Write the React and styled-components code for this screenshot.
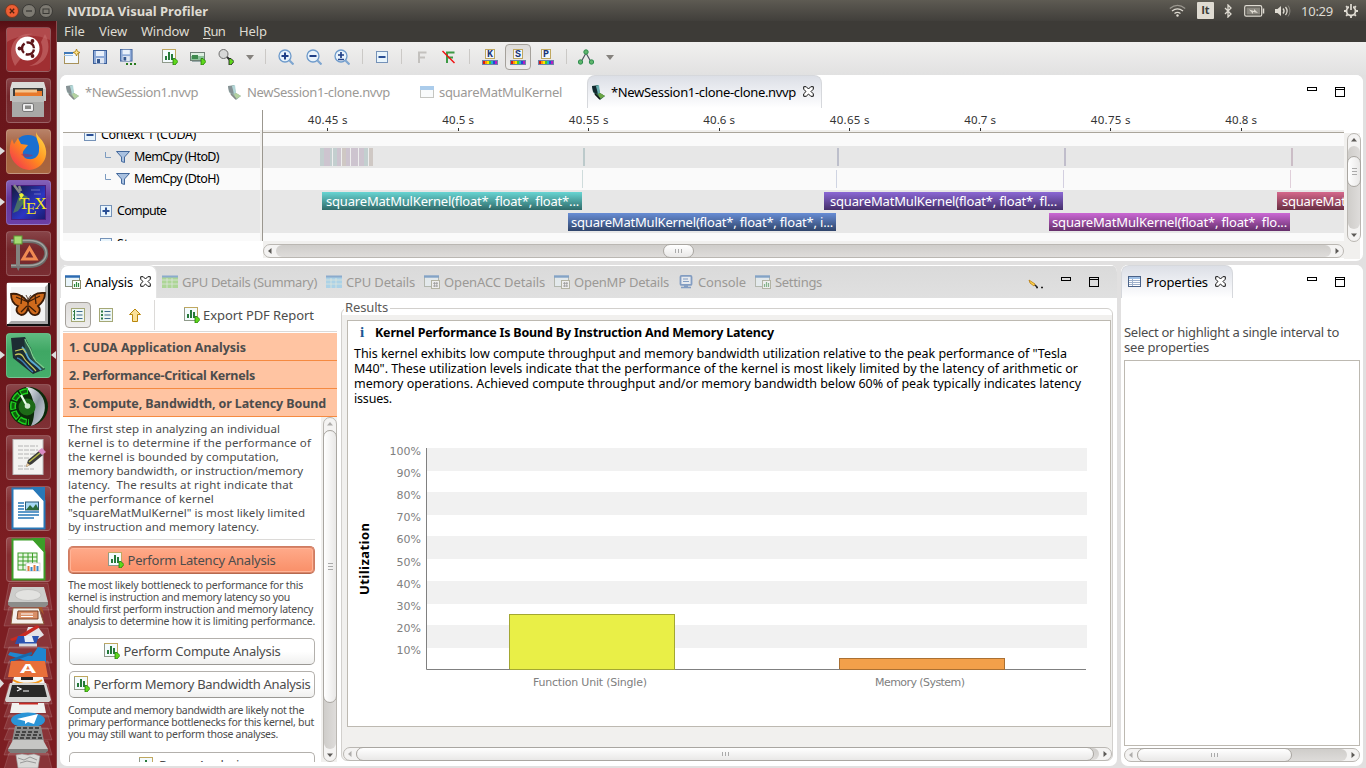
import React, { useLayoutEffect, useRef, useState } from "react";
import styled, { createGlobalStyle, css } from "styled-components";

const Global = createGlobalStyle`
  * { box-sizing: border-box; }
  html, body { margin: 0; padding: 0; overflow: hidden; background: #e1e0e0; }
  body { font-family: "Noto Sans", "Open Sans", sans-serif; font-size: 13px; color: #000; }
  svg { display: block; flex: none; }
`;

/* ---------- text ---------- */

const TextSpan = styled.span`
  display: block;
  flex: none;
  white-space: pre;
  width: ${(p) => p.$w}px;
  font-size: ${(p) => p.$size || 13}px;
  font-weight: ${(p) => (p.$bold ? 700 : 400)};
  color: ${(p) => p.$color || "inherit"};
  line-height: ${(p) => (p.$lh ? p.$lh + "px" : "normal")};
  margin-left: ${(p) => p.$ml || 0}px;
`;

// A label that tracks its letters so that it fills the given advance width.
function Text({ w, size, bold, color, lh, ml, children }) {
  const ref = useRef(null);
  const [spacing, setSpacing] = useState(0);
  useLayoutEffect(() => {
    const range = document.createRange();
    range.selectNodeContents(ref.current);
    const natural = range.getBoundingClientRect().width;
    const n = ref.current.textContent.length;
    if (n > 0) setSpacing((w - natural) / n);
  }, [w]);
  return (
    <TextSpan ref={ref} $w={w} $size={size} $bold={bold} $color={color} $lh={lh} $ml={ml} style={{ letterSpacing: spacing }}>
      {children}
    </TextSpan>
  );
}

/* ---------- desktop frame ---------- */

const Desktop = styled.div`
  width: 1366px;
  height: 768px;
  display: flex;
  flex-direction: column;
  overflow: hidden;
`;
const TitleBar = styled.header`
  height: 21px;
  flex: none;
  display: flex;
  align-items: center;
  padding: 0 7px 0 5px;
  background: linear-gradient(#5e5b53, #58554e 20%, #413f3b);
  color: #dfdbd2;
`;
const WindowButtons = styled.div`
  display: flex;
  gap: 3px;
  width: 62px;
`;
const Indicators = styled.div`
  margin-left: auto;
  display: flex;
  align-items: center;
`;
const Indicator = styled.div`
  margin-right: ${(p) => p.$gap || 0}px;
`;
const LangBadge = styled.div`
  width: 17px;
  height: 17px;
  border-radius: 1px;
  background: #dfdbd2;
  color: #3c3b37;
  font: 700 11px/16px "Noto Sans", sans-serif;
  text-align: center;
  margin-right: 10px;
`;
const Workspace = styled.div`
  flex: 1;
  min-height: 0;
  display: flex;
`;
const Launcher = styled.aside`
  width: 57px;
  flex: none;
  padding: 6px 0 0 6px;
  background: linear-gradient(#540f14 0, #6a161b 12px, #6b171c 45%, #7c1e22 70%, #7c1e22);
  border-right: 1px solid #8b4a4d;
  display: flex;
  flex-direction: column;
  gap: 6px;
  position: relative;
`;
const Tile = styled.div`
  width: 45px;
  height: 45px;
  flex: none;
  border-radius: 4px;
  background: ${(p) => p.$bg || "linear-gradient(rgba(255,255,255,.2), rgba(255,255,255,.07) 40%, rgba(255,255,255,.1))"};
  border: 1px solid rgba(255, 255, 255, 0.17);
  display: flex;
  align-items: center;
  justify-content: center;
  position: relative;
`;
const Pip = styled.i`
  position: absolute;
  top: 17px;
  ${(p) => (p.$right ? "right: -6px; border-right: 5px solid #ddd;" : "left: -7px; border-left: 5px solid #ddd;")}
  border-top: 4px solid transparent;
  border-bottom: 4px solid transparent;
`;
const FoldedStack = styled.div`
  margin: -6px 0 0 -6px;
`;
const AppWindow = styled.main`
  flex: 1;
  min-width: 0;
  display: flex;
  flex-direction: column;
`;
const MenuBar = styled.nav`
  height: 21px;
  flex: none;
  display: flex;
  align-items: center;
  gap: 14px;
  padding: 0 0 1px 7px;
  background: #3d3b37;
  color: #dfdbd2;
  & u { text-underline-offset: 2px; }
`;
const ToolBar = styled.div`
  height: 33px;
  flex: none;
  display: flex;
  align-items: center;
  padding: 0 0 3px 1px;
  background: linear-gradient(#f1f0ef, #e1e1e1);
`;
const Tool = styled.div`
  width: 28px;
  height: 28px;
  display: flex;
  align-items: center;
  justify-content: center;
  margin-left: ${(p) => p.$gap || 0}px;
`;
const Toggle = styled.div`
  width: 26px;
  height: 26px;
  flex: none;
  display: flex;
  align-items: center;
  justify-content: center;
  border: 1px solid #a5a19b;
  border-radius: 4px;
  background: linear-gradient(#dedcda, #eeedec);
`;
const Separator = styled.div`
  width: ${(p) => p.$w}px;
  height: 15px;
  display: flex;
  justify-content: center;
  margin-top: -2px;
  &::after { content: ""; width: 1px; background: #cbc9c6; }
`;
const DropArrow = styled.div`
  width: 19px;
  display: flex;
  justify-content: center;
  &::after {
    content: "";
    border: 4px solid transparent;
    border-top: 5px solid #85827d;
    border-bottom: 0;
  }
`;

/* ---------- panels ---------- */

const Body = styled.div`
  flex: 1;
  min-height: 0;
  padding: 0 3px 2px 3px;
  display: flex;
  flex-direction: column;
  gap: 4px;
  background: #e1e0e0;
`;
const Lower = styled.div`
  flex: 1;
  min-height: 0;
  display: flex;
  gap: 4px;
`;
const Panel = styled.section`
  background: #fff;
  border-radius: 7px;
  overflow: hidden;
  display: flex;
  flex-direction: column;
  ${(p) => (p.$h ? css`height: ${p.$h}px; flex: none;` : "")}
  ${(p) => (p.$w ? css`width: ${p.$w}px; flex: none;` : "")}
`;
const TabStrip = styled.div`
  height: 33px;
  flex: none;
  display: flex;
  align-items: center;
  padding-right: ${(p) => p.$pr || 18}px;
  background: ${(p) => (p.$grey ? "linear-gradient(#fff 1px, #dadada 1px, #e0e0e0)" : "#fff")};
  color: #9b9996;
`;
const Tab = styled.div`
  display: flex;
  align-items: center;
  height: 33px;
  flex: none;
  width: ${(p) => p.$w}px;
  padding: 1px 0 0 ${(p) => p.$pl || 0}px;
  ${(p) =>
    p.$active &&
    css`
      color: #000;
      padding-top: 0;
      padding-bottom: 1px;
      border-radius: 8px 8px 0 0;
      background: ${p.$active === "white" ? "#fff" : "linear-gradient(#dcdfe6, #f4f5f8 70%, #fff)"};
      border: 1px solid ${p.$active === "white" ? "#e4e4e4" : "#d6d8dc"};
      border-bottom: 0;
    `}
`;
const Faded = styled.div`
  opacity: ${(p) => (p.$on ? 0.5 : 1)};
  width: ${(p) => p.$w || 19}px;
  flex: none;
`;
const ViewButtons = styled.div`
  margin-left: auto;
  display: flex;
  gap: 18px;
  align-items: flex-start;
  height: 10px;
`;
const MinBox = styled.i`
  width: 10px;
  height: 4px;
  border: 1px solid #000;
`;
const MaxBox = styled.i`
  width: 10px;
  height: 10px;
  border: 1px solid #000;
  background: linear-gradient(transparent 1px, #000 1px, #000 2px, transparent 2px);
`;

/* ---------- scroll bars ---------- */

const Bar = styled.div`
  display: flex;
  flex: none;
  flex-direction: ${(p) => (p.$v ? "column" : "row")};
  ${(p) => (p.$v ? `width: 14px; height: ${p.$len}px;` : `height: 14px; width: ${p.$len}px;`)}
  border: 1px solid #bab7b2;
  border-radius: 7px;
  background: #f4f3f2;
`;
const BarArrow = styled.div`
  ${(p) => (p.$v ? "height: 12px;" : "width: 12px;")}
  flex: none;
  display: flex;
  align-items: center;
  justify-content: center;
  opacity: ${(p) => (p.$dim ? 0.45 : 1)};
`;
const Trough = styled.div`
  flex: 1;
  min-height: 0;
  min-width: 0;
  border-radius: 6px;
  background: ${(p) => (p.$v ? "linear-gradient(90deg, #cfcdca, #dedcda)" : "linear-gradient(#cfcdca, #dedcda)")};
`;
const Thumb = styled.div`
  ${(p) =>
    p.$v
      ? `height: ${p.$size}px; width: 14px; margin: ${p.$at}px 0 0 -1px; background: linear-gradient(90deg, #fff, #e9e8e7);`
      : `width: ${p.$size}px; height: 14px; margin: -1px 0 0 ${p.$at}px; background: linear-gradient(#fff, #e9e8e7);`}
  border: 1px solid #a9a6a1;
  border-radius: 7px;
  display: flex;
  align-items: center;
  justify-content: center;
`;
const Grip = styled.i`
  ${(p) =>
    p.$v
      ? "width: 5px; height: 7px; background: repeating-linear-gradient(#aaa 0 1px, transparent 1px 3px);"
      : "width: 7px; height: 4px; background: repeating-linear-gradient(90deg, #aaa 0 1px, transparent 1px 3px);"}
`;
const turn = { left: 180, right: 0, up: -90, down: 90 };
const Arrow = ({ dir }) => (
  <svg width="8" height="8" viewBox="0 0 8 8">
    <path d="M2.5 1 6 4 2.5 7z" fill="#5c5a57" transform={`rotate(${turn[dir]} 4 4)`} />
  </svg>
);
function ScrollBar({ v, len, at, size, dimStart }) {
  return (
    <Bar $v={v} $len={len}>
      <BarArrow $v={v} $dim={dimStart}><Arrow dir={v ? "up" : "left"} /></BarArrow>
      <Trough $v={v}>
        <Thumb $v={v} $at={at} $size={size}><Grip $v={v} /></Thumb>
      </Trough>
      <BarArrow $v={v}><Arrow dir={v ? "down" : "right"} /></BarArrow>
    </Bar>
  );
}

/* ---------- timeline ---------- */

const TimelineBody = styled.div`
  flex: 1;
  min-height: 0;
  display: flex;
  padding-left: 3px;
`;
const Tree = styled.div`
  width: 197px;
  flex: none;
  padding-top: 24px;
`;
const Rows = styled.div`
  height: 109px;
  overflow: hidden;
  border-top: 1px solid #aaa59b;
`;
const Row = styled.div`
  height: ${(p) => p.$h}px;
  background: ${(p) => (p.$alt ? "#e7e7e7" : "#fafafa")};
  display: flex;
  align-items: center;
  overflow: hidden;
  padding-left: ${(p) => p.$pl || 0}px;
  gap: 5px;
`;
const Lift = styled.div`
  display: flex;
  align-items: center;
  gap: ${(p) => p.$gap ?? 5}px;
  margin-top: ${(p) => p.$dy || 0}px;
`;
const CloseSlot = styled.div`
  margin-left: 7px;
`;
const Sash = styled.div`
  width: 3px;
  height: 131px;
  margin-top: 2px;
  flex: none;
  background: linear-gradient(#fff 20px, #f1f0ee 20px);
  border-right: 1px solid #9b978f;
`;
const Chart = styled.div`
  width: 1081px;
  flex: none;
`;
const Ruler = styled.div`
  height: 24px;
  display: flex;
  margin-left: -0.5px;
  padding-top: 4px;
  overflow: hidden;
  background: linear-gradient(transparent 22px, #f0efed 22px);
`;
const Mark = styled.div`
  width: 130.5px;
  flex: none;
  display: flex;
  flex-direction: column;
  align-items: center;
  &::after { content: ""; width: 1px; height: 3px; background: #333; }
`;
const Lane = styled.div`
  height: ${(p) => p.$h}px;
  background: ${(p) => (p.$alt ? "#e7e7e7" : "#fafafa")};
  padding-top: 2px;
`;
const Track = styled.div`
  display: flex;
  height: 18px;
  overflow: hidden;
  margin-bottom: 3px;
`;
const Interval = styled.div`
  flex: none;
  height: 18px;
  width: ${(p) => p.$w}px;
  margin-left: ${(p) => p.$gap}px;
  background: ${(p) => p.$bg};
  color: #fff;
  overflow: hidden;
  padding-left: ${(p) => p.$pl || 0}px;
`;
const VBarSlot = styled.div`
  width: 16px;
  margin-top: 25px;
  padding: 0 0 0 3px;
  height: 126px;
  background: #f1f0ee;
`;
const HBarSlot = styled.div`
  background: #f1f0ee;
  height: 17px;
  padding-top: 3px;
`;

/* ---------- analysis ---------- */

const AnalysisBody = styled.div`
  flex: 1;
  min-height: 0;
  display: flex;
  padding-left: 3px;
`;
const Guide = styled.div`
  width: 274px;
  flex: none;
  display: flex;
  flex-direction: column;
  padding-bottom: 4px;
`;
const GuideTools = styled.div`
  height: 34px;
  flex: none;
  display: flex;
  align-items: center;
  padding-left: 2px;
  border-bottom: 1px solid #dcdad8;
`;
const GuideSlot = styled.div`
  width: ${(p) => p.$w}px;
  display: flex;
  justify-content: center;
`;
const VLine = styled.div`
  width: 1px;
  height: 30px;
  background: #dcdad8;
  margin-right: 29px;
  margin-left: 6px;
`;
const Stages = styled.div`
  padding-top: 1px;
`;
const Stage = styled.div`
  height: 28px;
  background: #ffc4a2;
  border-bottom: 1px solid #f58a41;
  display: flex;
  align-items: center;
  padding: 1px 0 0 6px;
`;
const GuideScroll = styled.div`
  flex: 1;
  min-height: 0;
  display: flex;
  background: linear-gradient(90deg, #fff 258px, #f1f0ee 258px);
`;
const Steps = styled.div`
  width: 260px;
  flex: none;
  overflow: hidden;
  padding: 5px 8px 0 5px;
  color: #4c4c4c;
`;
const Intro = styled.div`
  height: 118px;
  border-bottom: 1px solid #dcdad8;
  margin-bottom: 6px;
`;
const Note = styled.div`
  padding-top: ${(p) => p.$pt || 5}px;
  height: ${(p) => p.$h}px;
`;
const Action = styled.div`
  width: ${(p) => (p.$hot ? 247 : 246)}px;
  height: ${(p) => (p.$hot ? 28 : 27)}px;
  margin-left: ${(p) => (p.$hot ? 0 : 1)}px;
  margin-bottom: ${(p) => p.$mb || 0}px;
  padding-bottom: 1px;
  border-radius: 5px;
  border: 1px solid ${(p) => (p.$hot ? "#cf7c62" : "#b3b0ac")};
  border-bottom-color: ${(p) => (p.$hot ? "#b5694f" : "#9a9894")};
  ${(p) => p.$hot && "box-shadow: inset 0 0 0 1px #d98468, inset 0 0 0 2px #ffb497;"}
  background: ${(p) => (p.$hot ? "linear-gradient(#ffab8b, #f98e67)" : "linear-gradient(#fff 50%, #f0f0ef)")};
  display: flex;
  align-items: center;
  justify-content: center;
  gap: 4px;
`;
const Results = styled.div`
  width: 772px;
  margin: 10px 0 5px 4px;
  border: 1px solid #d2d0cd;
  border-radius: 6px;
  background: linear-gradient(#fff 6px, #f1f0ee 6px);
  padding-left: 1px;
`;
const Legend = styled.div`
  height: 16px;
  width: 46px;
  margin: -10px 0 0 1px;
  padding-left: 1px;
  background: #fff;
  color: #5b5a58;
`;
const ResultPage = styled.div`
  margin: 5px 0 20px 4px;
  width: 764px;
  height: 407px;
  background: #fff;
  border: 1px solid #bdb9b1;
  padding: 3px 0 0 6px;
`;
const Headline = styled.div`
  display: flex;
  align-items: center;
  height: 17px;
  padding-left: 6px;
  margin-bottom: 5px;
`;
const InfoMark = styled.span`
  font: 700 15px/17px "Liberation Serif", serif;
  color: #1d5893;
  width: 15px;
`;

const PropertyBody = styled.div`
  flex: 1;
  padding: 27px 3px 4px 3px;
  color: #4c4c4c;
`;
const PropertyBox = styled.div`
  height: 386px;
  border: 1px solid #bdb9b1;
  background: #fff;
  margin: 5px 0 2px;
`;

/* ---------- small icons ---------- */

const Ico = ({ s = 16, w, h, children }) => (
  <svg width={w || s} height={h || s} viewBox={`0 0 ${w || s} ${h || s}`}>{children}</svg>
);
const Go = () => <path d="M11 9.500h2l3 3-3 3.500h-2z" fill="#5fd81c" stroke="#1f7a06" strokeWidth=".8" />;
const ChartGo = () => (
  <Ico>
    <rect x=".5" y=".5" width="13" height="13" fill="#f4fbfd" stroke="#8f9a8a" />
    <path d="M0 .5h14M13.500 0v9" stroke="#c0a860" />
    <path d="M4 7v4M7 3v8M10 5v6" stroke="#267a3a" strokeWidth="2" />
    <Go />
  </Ico>
);
const NewWin = () => (
  <Ico>
    <rect x=".5" y="3.500" width="14" height="11" fill="#f3f8fc" stroke="#a8925a" />
    <path d="M0 4h9" stroke="#3f78b8" strokeWidth="2" />
    <path d="M0 6.500h9" stroke="#9fc4e8" />
    <path d="M12.500 0l1 2.500 2.500 1-2.500 1-1 2.500-1-2.500-2.500-1 2.500-1z" fill="#ffe58a" stroke="#a87c0c" strokeWidth=".8" />
  </Ico>
);
const Floppy = ({ dots }) => (
  <Ico>
    <g transform={dots ? "translate(-1 -1) scale(.9)" : ""}>
      <rect x="1.500" y="1.500" width="13" height="13" fill="#8fabd8" stroke="#3d609a" />
      <rect x="4" y="2" width="8" height="5" fill="#e9f0fa" />
      <rect x="4" y="9" width="8" height="5.500" fill="#dfe6f2" />
      <rect x="5" y="10" width="3" height="4" fill="#35588f" />
    </g>
    {dots && <path d="M6 15h2M10 15h2M14 15h2" stroke="#267a1c" strokeWidth="2" />}
  </Ico>
);
const Board = () => (
  <Ico>
    <rect x=".5" y="3.500" width="14" height="8" fill="#8cc29a" stroke="#6f8076" />
    <rect x="1" y="4" width="13" height="3" fill="#dcefe0" />
    <rect x="2" y="6" width="6" height="4" fill="#3d8a4d" />
    <path d="M2 12.500h9" stroke="#9aa" />
    <Go />
  </Ico>
);
const Lens = () => (
  <Ico>
    <circle cx="5.500" cy="5" r="4.500" fill="#d7d7d7" stroke="#6e6e6e" />
    <path d="M9 8l3 3" stroke="#333" strokeWidth="2" />
    <path d="M11 9.500h2l3 3-3 3.500h-2z" fill="#5fd81c" stroke="#222" strokeWidth=".9" />
  </Ico>
);
const Zoom = ({ kind }) => (
  <Ico>
    <circle cx="7" cy="7" r="6" fill="#e9f3fb" stroke="#6d9acb" strokeWidth="1.300" />
    <path d="M11.500 11.500l4 4" stroke="#7fa6d0" strokeWidth="2.200" />
    {kind === "fit" ? (
      <path d="M4 6h6M7 3v6M4 10.500h6" stroke="#1f3f86" strokeWidth="1.700" />
    ) : (
      <path d={kind === "in" ? "M3.500 7h7M7 3.500v7" : "M3.500 7h7"} stroke="#1f3f86" strokeWidth="2" />
    )}
  </Ico>
);
const SignBox = ({ plus }) => (
  <Ico s={12}>
    <rect x=".5" y=".5" width="11" height="11" fill="#e9f5fc" stroke="#7592b8" />
    <path d={plus ? "M2.500 6h7M6 2.500v7" : "M2.500 6h7"} stroke="#2a4f95" strokeWidth="2" />
  </Ico>
);
const FIcon = ({ off }) => (
  <Ico s={14}>
    <path d="M5 13V2.500h7.500M5 7.500h6" fill="none" stroke={off ? "#3d9a44" : "#c3c1be"} strokeWidth="2" />
    {off && <path d="M.5 1l12 12" stroke="#f01010" strokeWidth="1.500" />}
  </Ico>
);
const KeyLabel = styled.text`
  font: 700 10px "Liberation Mono", monospace;
  fill: #1b3576;
`;
const KeyIcon = ({ k }) => (
  <Ico>
    <rect x="3.500" y=".5" width="9" height="9" fill="#f2f7fd" stroke="#c0a860" />
    <KeyLabel x="8" y="8.300" textAnchor="middle">{k}</KeyLabel>
    <rect x="0" y="11" width="16" height="5" fill="#6c82ac" />
    {["#d81818", "#ff9a00", "#ffe600", "#44c72c", "#1fb5c9", "#2448d8", "#b31fc0"].map((c, i) => (
      <rect key={c} x={1 + i * 2} y="12" width="2" height="3" fill={c} />
    ))}
  </Ico>
);
const Graph = () => (
  <Ico>
    <path d="M8 4L3 13M8 4l5 9" stroke="#4d5560" strokeWidth="1.200" />
    {[[8, 3], [2.500, 13], [13.500, 13]].map(([x, y]) => (
      <circle key={x} cx={x} cy={y} r="2.200" fill="#5fb56c" stroke="#2e8d4f" />
    ))}
  </Ico>
);
const Session = () => (
  <Ico w={14} h={16}>
    <path d="M0 2l6-1 2 8 5 3-5 4-7-8z" fill="#2a5a50" />
    <path d="M0 2h4l2 6-2 2-3-3z" fill="#12282e" />
    <path d="M4 2l3-1 1 8-2 1z" fill="#68aeb0" />
    <path d="M6 10l2-1 5 3-5 3z" fill="#6aa544" />
    <path d="M3 10l5 5" stroke="#0e1512" strokeWidth="1.500" />
  </Ico>
);
const Sheet = () => (
  <Ico w={14} h={13}>
    <rect x=".5" y=".5" width="13" height="11" fill="#f4f8fb" stroke="#8d8f86" />
    <rect x="0" y="0" width="14" height="4" fill="#5a9bd8" />
  </Ico>
);
const CloseX = () => (
  <Ico s={11}>
    <path d="M.7.7h2.500L5.500 3 7.800.7h2.500v2.500L8 5.500l2.300 2.300v2.500H7.800L5.500 8 3.200 10.300H.7V7.800L3 5.500.7 3.200z" fill="#fff" stroke="#111" />
  </Ico>
);
const ViewIcon = ({ kind }) => (
  <Ico w={16} h={14}>
    {kind === "gpu" || kind === "cpu" ? (
      <>
        <rect x="0" y="1" width="16" height="12" fill={kind === "gpu" ? "#7fd052" : "#7cc8f0"} />
        <path d="M0 5h16M0 9h16M5 3v10M10 3v10" stroke="#dfeedd" strokeWidth=".8" />
        <path d="M0 1.500h16" stroke="#3c7cc0" strokeWidth="2" />
      </>
    ) : kind === "console" ? (
      <>
        <rect x="1.500" y="0.900" width="11" height="9" rx="1" fill="#f0f6ff" stroke="#2b5ea8" strokeWidth="1.800" />
        <path d="M4 4h5M4 6.500h6" stroke="#2b5ea8" />
        <path d="M5 11h4M2 12.500h10" stroke="#2b5ea8" strokeWidth="1.400" />
      </>
    ) : kind === "table" ? (
      <>
        <rect x=".5" y="1.500" width="12" height="10" fill="#fff" stroke="#4a6288" />
        <rect x="1" y="2" width="11" height="2" fill="#9fc0e6" />
        <path d="M1 5.500h11M1 7.500h11M1 9.500h11M4.500 4v7" stroke="#9fb1cc" />
      </>
    ) : (
      <>
        <rect x=".5" y="1.500" width="14" height="10" fill="#e9f5fa" stroke="#8a917f" />
        <path d="M0 1.500h15" stroke="#2c6bb2" strokeWidth="2.400" />
        <rect x="7.500" y="5.500" width="8" height="8" fill="#fff" stroke="#8a8a6a" />
        {kind === "hash" ? (
          <path d="M9 8.300h5M9 11h5M10.600 7v5M12.800 7v5" stroke="#555" strokeWidth=".8" />
        ) : (
          <path d="M9.500 9v3M11.500 7v5M13.500 8v4" stroke="#2f8a3c" strokeWidth="1.200" />
        )}
      </>
    )}
  </Ico>
);
const ListIcon = ({ nested }) => (
  <Ico s={14}>
    <rect x=".5" y=".5" width="13" height="13" fill="#eef7f4" stroke="#a5a876" />
    <path d="M5.500 3.500h6M5.500 7h6M5.500 10.500h6" stroke="#3d6a8c" strokeWidth="1.200" />
    {nested ? <path d="M3.500 2v10M2 3.500h2M2 7h2M2 10.500h2" stroke="#2e7a44" /> : <path d="M2 3.500h2M2 7h2M2 10.500h2" stroke="#2e7a44" strokeWidth="2" />}
  </Ico>
);
const UpArrow = () => (
  <Ico s={14}>
    <path d="M7 1l5.500 5.500H9.500v7h-5v-7H1.500z" fill="#fbe29a" stroke="#b8860b" />
  </Ico>
);
const Funnel = () => (
  <Ico w={14} h={12}>
    <path d="M.5.500h13l-5 5.500v5.500l-3-1V6z" fill="#a9c1e0" stroke="#44699c" />
  </Ico>
);
const Elbow = () => (
  <Ico w={6} h={10}>
    <path d="M.5 0v5.500H6" fill="none" stroke="#7c9bc0" />
  </Ico>
);
const PenIcon = () => (
  <Ico w={15} h={12}>
    <path d="M1 3l6 4-1 2-4-3z" fill="#ffd54a" stroke="#b77b12" strokeWidth=".8" />
    <path d="M8 10.500h2M13 10.500h2M7 8l2 2" stroke="#222" strokeWidth="1.500" />
  </Ico>
);

/* ---------- launcher drawings ---------- */

const Dash = () => (
  <Ico s={43}>
    <rect width="43" height="43" rx="3" fill="#a02f32" />
    <path d="M0 0h43v12C30 6 12 6 0 14z" fill="#b85557" opacity=".7" />
    <path d="M8 38C-2 20 8 4 26 6c-14 2-18 14-12 24M38 6c8 14 2 32-16 32 12-4 16-14 12-24" fill="#c46a6a" opacity=".65" />
    <circle cx="20.500" cy="20.500" r="12" fill="#fff" />
    <circle cx="21" cy="20.500" r="6" fill="none" stroke="#5d1519" strokeWidth="2.400" strokeDasharray="10.500 2" strokeDashoffset="-1" />
    <circle cx="12.500" cy="20.500" r="1.900" fill="#5d1519" />
    <circle cx="25.500" cy="13" r="1.900" fill="#5d1519" />
    <circle cx="25.500" cy="28" r="1.900" fill="#5d1519" />
  </Ico>
);
const Files = () => (
  <Ico s={43}>
    <path d="M5 3h32l2 7H3z" fill="#dcdcda" />
    <path d="M3 10h36v12H3z" fill="#c3c3c1" />
    <path d="M6 9h30v9H6z" fill="#3c3c3a" />
    <path d="M8 12h27v6H8z" fill="#e8792c" />
    <path d="M8 10.500h22v3H8z" fill="#f5c48c" />
    <path d="M5 17h32v21H5z" fill="#a9a9a7" />
    <path d="M5 17h32v6H5z" fill="#bdbdbb" />
    <rect x="15.500" y="24.500" width="11" height="8" rx="1.500" fill="#eee" stroke="#777" />
    <rect x="18" y="26.500" width="6" height="3.500" fill="#8a8a88" />
  </Ico>
);
const Fox = () => (
  <Ico s={43}>
    <defs>
      <linearGradient id="fx" x1="1" y1="0" x2="0" y2="1">
        <stop offset="0" stopColor="#ffe14a" />
        <stop offset=".5" stopColor="#ff8a1e" />
        <stop offset="1" stopColor="#f0255a" />
      </linearGradient>
    </defs>
    <circle cx="21" cy="20" r="15" fill="#1a6fd0" />
    <path d="M29 2c1 4 4 5 7 10 5 8 4 17-2 23S18 42 10 35 1 18 5 9l2 5 4-6 3 6 7 1-4 5c-2 2-2 8 4 9 7 1 11-3 11-9 1-7-3-9-3-18z" fill="url(#fx)" />
    <path d="M14 24c3 4 9 4 12 1-3 0-5-2-12-1z" fill="#b5264a" opacity=".5" />
  </Ico>
);
const TexLabel = styled.text`
  font: 17px "Liberation Serif", serif;
  fill: #f5e61e;
`;
const Tex = () => (
  <Ico s={43}>
    <defs>
      <linearGradient id="tx" x1="0" y1="0" x2="1" y2="1">
        <stop offset="0" stopColor="#141a38" />
        <stop offset=".6" stopColor="#2c36c4" />
        <stop offset="1" stopColor="#1a1a6c" />
      </linearGradient>
    </defs>
    <rect x="4.500" y="4.500" width="34" height="34" fill="url(#tx)" stroke="#4a1d7c" />
    <path d="M13 12l8 4-10 14-5 2z" fill="#5f9a4c" opacity=".6" />
    <path d="M12 13l3-1 2 2-3 4z" fill="#e8f23a" />
    <path d="M7 4l6 8M12 5l2 5" stroke="#888" strokeWidth="2.500" />
    <path d="M24 9h9M27 13h7" stroke="#6a70c0" />
    <TexLabel x="12" y="28">T</TexLabel>
    <TexLabel x="19" y="33">E</TexLabel>
    <TexLabel x="27.500" y="28">X</TexLabel>
  </Ico>
);
const Draft = () => (
  <Ico s={43}>
    <path d="M4 9h18c23 0 23 25 0 25H4" fill="none" stroke="#6b6b69" strokeWidth="4" />
    <path d="M4 8.500h18c23 0 23 25 0 25H4" fill="none" stroke="#a3a3a0" strokeWidth="1.500" />
    <path d="M11 8v27" stroke="#83837f" strokeWidth="4" />
    <path d="M9 34h4.500l-2.200 5z" fill="#777" />
    <rect x="7" y="4" width="8" height="8" fill="#a5dc74" stroke="#5f9a34" />
    <path d="M22.500 16l6.500 11H16z" fill="none" stroke="#f08a52" strokeWidth="3" />
  </Ico>
);
const Butterfly = () => (
  <Ico s={43}>
    <rect width="43" height="43" fill="#111" />
    <path d="M0 0h41v41H0z" fill="#fff" />
    <path d="M41 1v40H1l3-3h34V4z" fill="#a9a9a9" />
    <path d="M4 4h34v34H4z" fill="#f4f4f4" />
    <path d="M21 19C16 12 9 10 4 11c0 6 2 10 7 12-3 4-1 8 3 9 4 0 6-3 7-7 1 4 4 8 8 7 4-1 5-6 2-9 4-3 7-8 7-13-8-1-14 3-17 9z" fill="#cf6a1c" stroke="#3b1c08" strokeWidth="1.800" />
    <path d="M21 16v12M21 19L9 14M21 19l12-6M20 23l-6 6M22 23l7 6M15 12l-1 9M28 12l1 9" stroke="#3b1c08" strokeWidth="1.300" />
    <path d="M21 16l-2-4M21 16l3-4" stroke="#3b1c08" strokeWidth=".8" />
  </Ico>
);
const Nvvp = () => (
  <Ico s={43}>
    <path d="M4 4l14-1 5 11 4 10 11 11-12 5L6 24z" fill="#1d2d33" />
    <path d="M17 4l7 10 3 10 11 11-4 2-16-20z" fill="#2b5548" />
    <path d="M18 5c1 5 4 6 6 12s2 7 5 10l8 7" fill="none" stroke="#7fd48f" strokeWidth="1.200" />
    <path d="M15 13c4 3 4 9 8 13s8 6 11 10" fill="none" stroke="#59a8d0" strokeWidth="1.800" />
    <path d="M8 21c4-2 7-1 9 3s7 7 12 13M8 17l8-2 3 4" fill="none" stroke="#c8c95c" strokeWidth="1.200" />
    <path d="M10 24c6 1 8 8 16 14" fill="none" stroke="#3f7fb4" strokeWidth="1.500" />
  </Ico>
);
const Gauge = () => (
  <Ico s={43}>
    <defs>
      <linearGradient id="sv" x1="0" y1="0" x2="1" y2="1">
        <stop offset="0" stopColor="#f2f5f8" />
        <stop offset=".5" stopColor="#8f9aa6" />
        <stop offset="1" stopColor="#d5dbe2" />
      </linearGradient>
    </defs>
    <circle cx="21.500" cy="21.500" r="19.500" fill="#0c2a0a" />
    <path d="M19 2a20 20 0 0 1 5 39c5-10 5-28-5-39z" fill="url(#sv)" />
    <path d="M21 6a15.500 15.500 0 0 0 1 31" fill="none" stroke="#1fd11f" strokeWidth="6" strokeDasharray="8 1.500" />
    <path d="M21 6a15.500 15.500 0 0 0 1 31" fill="none" stroke="#0f5c0d" strokeWidth="3" strokeDasharray="6 3.500" strokeDashoffset="-1" />
    <circle cx="20" cy="22" r="8.500" fill="#1d6a17" />
    <path d="M14 10l6 11" stroke="#e9ffe9" strokeWidth="2.200" />
    <circle cx="20.500" cy="21" r="2.800" fill="#cfe8cf" />
  </Ico>
);
const Editor = () => (
  <Ico s={43}>
    <rect x="6" y="3.500" width="30" height="35" fill="#f3f3f1" stroke="#bbb" />
    <path d="M11 10h20M11 14h20M11 18h18M11 22h12M11 30h10M11 33h16" stroke="#b4b4b4" strokeDasharray="5 1" />
    <path d="M19 31l2-7 11-9 4 4-11 9z" fill="#3c3c3a" />
    <path d="M19 31l1-4 3 2z" fill="#e8c89a" />
    <path d="M22 26l11-9" stroke="#b9b94c" strokeWidth="1.500" />
    <path d="M31 15l4-3 4 4-4 3z" fill="#d98cc4" />
  </Ico>
);
const Office = ({ color, sheet }) => (
  <Ico s={43}>
    <path d="M5.500 1.500h21l11 12v28h-32z" fill="#fff" stroke={color} strokeWidth="2" />
    <path d="M24 0h14v15z" fill={color} />
    {sheet ? (
      <>
        <rect x="11" y="15" width="19" height="17" fill="#eaf7e4" stroke={color} />
        <path d="M11 19h19M11 23h19M11 27h19M16 15v17M21 15v17M25.500 15v17" stroke={color} />
        <rect x="19" y="25" width="14" height="8" fill="#fff" stroke="#bbb" strokeWidth=".6" />
        <path d="M21.500 33v-5M27.500 33v-6" stroke="#e0783c" strokeWidth="2" />
        <path d="M24.500 33v-4M30.500 33v-5" stroke="#3f86c8" strokeWidth="2" />
      </>
    ) : (
      <>
        <path d="M11 16h6M11 19h6M11 22h6M11 25h21M11 28h21M11 31h16" stroke="#2878b8" strokeWidth="1.500" />
        <rect x="18.500" y="15" width="13" height="8" fill="#a6d8f5" stroke="#2a5a78" />
        <path d="M19 23l4-5 3 3 3-4 3 6z" fill="#2b6a3a" />
      </>
    )}
  </Ico>
);
const ALabel = styled.text`
  font: 700 12px "Noto Sans", sans-serif;
  fill: ${(p) => p.$c};
`;
const Folded = () => (
  <svg width="57" height="186" viewBox="0 0 57 186">
    {[[0, 27], [24, 19], [45, 20], [64, 16], [78, 18], [101, 20], [120, 14], [132, 14], [145, 12], [158, 14], [170, 16]].map(([y, h]) => (
      <path key={y} d={`M9 ${y + 1}h39l4 ${h}H4z`} fill="rgba(255,255,255,.1)" stroke="rgba(255,255,255,.2)" strokeWidth=".7" />
    ))}
    <path d="M12 5h32l4 15-3 5H11l-3-5z" fill="#cdcdcb" />
    <path d="M8 20h40v3l-3 2H11l-3-2z" fill="#8c8c8a" />
    <ellipse cx="28" cy="13" rx="13" ry="5.500" fill="#e2e2e0" stroke="#b4b4b2" strokeWidth=".6" />
    <path d="M13 26h26l5 16H11z" fill="#f4f1ec" stroke="#8a5a38" />
    <path d="M38 25h4l2 8z" fill="#a8582c" />
    <path d="M18 29h20v8H17z" fill="#d99068" stroke="#7c4226" />
    <path d="M21 32h12M21 34.500h12" stroke="#fff" />
    <path d="M28 45h10l6 8-6 4H24z" fill="#e2e2e6" />
    <path d="M10 57l10-4 17-10 3 2-18 11-10 3z" fill="#c92a22" />
    <path d="M18 54h21l-3 8H15z" fill="#2b52b0" />
    <path d="M24 54h8l2 6h-9z" fill="#e8eef8" />
    <path d="M19 63h18" stroke="#d8d8dc" strokeWidth="3" />
    <path d="M10 70l22 4 6-9 8 2v13l-8 3-27-9-3-1z" fill="#1f86cf" />
    <path d="M10 79l22-8" stroke="#1768a8" strokeWidth="2.500" />
    <path d="M11 79h34l3 16H8z" fill="#e8703a" />
    <ALabel x="20" y="91" $c="#fff" textLength="16" lengthAdjust="spacingAndGlyphs">A</ALabel>
    <path d="M14 95h29l3 10H11z" fill="#f5f5f3" />
    <path d="M21 95h12v3H21z" fill="#222" />
    <path d="M13 98c8 5 22 5 29 0" fill="none" stroke="#f59a1e" strokeWidth="2" />
    <path d="M10 101h36l5 17-2 2H6l-1-2z" fill="#d5d5d3" />
    <path d="M12 103h32l3 12H9z" fill="#2a2a28" />
    <path d="M17 105l4 2-4 2M23 109h6" fill="none" stroke="#fff" strokeWidth="1.200" />
    <path d="M0 97l4 4.500-4 4.500z" fill="#ddd" />
    <path d="M12 121h32l2 10H10z" fill="#f1f1ef" />
    <path d="M19 121h19v1.500H19z" fill="#c92a22" />
    <ellipse cx="28" cy="138" rx="17" ry="7.500" fill="#2a94d6" />
    <path d="M17 137l21-5-4 10-6-2-3 2v-3z" fill="#fff" />
    <path d="M15 144h26l3 15H12z" fill="#8c8c8c" />
    <path d="M17 146h22M16 150h24M15 153h26M14 156h28" stroke="#444" strokeWidth="2" strokeDasharray="4 2" />
    <path d="M13 158h30l5 9-3 4H11l-3-4z" fill="#c6c6c4" />
    <path d="M8 167h40v2l-3 2H11l-3-2z" fill="#7c7c7a" />
    <path d="M16 173l6-1 6 1 6-1 6 2-2 12H18z" fill="#d9d9d7" stroke="#999" strokeWidth=".6" />
    <path d="M18 176l6 2 6-3 7 3M20 181l7-2 9 2" stroke="#999" fill="none" />
  </svg>
);

/* ---------- data ---------- */

const menus = [["File", 21], ["View", 28], ["Window", 48], ["Run", 22], ["Help", 28]];
const marks = ["40.45 s", "40.5 s", "40.55 s", "40.6 s", "40.65 s", "40.7 s", "40.75 s", "40.8 s"];
const mint = "#c3cfcf";
const lilac = "#cdc4cf";
const sand = "#cfc8c4";
const gapTint = "#eeeeee";
const tints = [[mint, 4], [lilac, 6], [mint, 2], [gapTint, 1], [mint, 4], [lilac, 4], [gapTint, 1], [sand, 4], [lilac, 4], [gapTint, 1], [lilac, 7], [gapTint, 1], [lilac, 5], [mint, 4], [gapTint, 1], [sand, 4]];
const intro = [
  ["The first step in analyzing an individual", 212],
  ["kernel is to determine if the performance of", 243],
  ["the kernel is bounded by computation,", 211],
  ["memory bandwidth, or instruction/memory", 235],
  ["latency.  The results at right indicate that", 225],
  ["the performance of kernel", 146],
  ["\"squareMatMulKernel\" is most likely limited", 237],
  ["by instruction and memory latency.", 191],
];
const latencyNote = [
  ["The most likely bottleneck to performance for this", 235],
  ["kernel is instruction and memory latency so you", 222],
  ["should first perform instruction and memory latency", 245],
  ["analysis to determine how it is limiting performance.", 247],
];
const computeNote = [
  ["Compute and memory bandwidth are likely not the", 236],
  ["primary performance bottlenecks for this kernel, but", 246],
  ["you may still want to perform those analyses.", 210],
];
const summary = [
  ["This kernel exhibits low compute throughput and memory bandwidth utilization relative to the peak performance of \"Tesla", 713],
  ["M40\". These utilization levels indicate that the performance of the kernel is most likely limited by the latency of arithmetic or", 724],
  ["memory operations. Achieved compute throughput and/or memory bandwidth below 60% of peak typically indicates latency", 727],
  ["issues.", 38],
];

const AxisText = styled.text`
  font: 11px "DejaVu Sans", sans-serif;
  fill: #808080;
`;
const AxisTitle = styled.text`
  font: 700 13px "Noto Sans", sans-serif;
`;

function UtilizationChart() {
  return (
    <svg width="750" height="285" viewBox="354 425 750 285">
      {[448, 492, 536, 581, 625].map((y) => (
        <rect key={y} x="427" y={y} width="660" height="23" fill="#f1f1f1" />
      ))}
      {[100, 90, 80, 70, 60, 50, 40, 30, 20, 10].map((v, i) => (
        <AxisText key={v} x="421" y={455 + i * 22.1} textAnchor="end">{v}%</AxisText>
      ))}
      <rect x="509.500" y="614.500" width="165" height="55" fill="#e9ef47" stroke="#a3a732" />
      <rect x="839.500" y="658.500" width="165" height="11" fill="#f3a04a" stroke="#aa7033" />
      <path d="M426.500 448v221.500H1086" fill="none" stroke="#808080" />
      <path d="M510 669.500h165" stroke="#a3a732" />
      <path d="M840 669.500h165" stroke="#aa7033" />
      <AxisText x="533" y="686" textLength="114">Function Unit (Single)</AxisText>
      <AxisText x="875" y="686" textLength="90">Memory (System)</AxisText>
      <AxisTitle transform="translate(369 595) rotate(-90)" textLength="72">Utilization</AxisTitle>
    </svg>
  );
}

const Kernel = ({ w, gap, bg, pl = 4, tw, children }) => (
  <Interval $w={w} $gap={gap} $bg={bg} $pl={pl}>
    <Text w={tw} lh={18} size={13}>{children}</Text>
  </Interval>
);

const MinMax = () => (
  <ViewButtons><MinBox /><MaxBox /></ViewButtons>
);

export default function App() {
  return (
    <Desktop>
      <Global />
      <TitleBar>
        <WindowButtons>
          <Ico s={14}><circle cx="7" cy="7" r="6.500" fill="#ee5e33" stroke="#7a3a22" /><path d="M4.800 4.800l4.400 4.400M9.200 4.800L4.800 9.200" stroke="#4a2010" strokeWidth="1.300" /></Ico>
          <Ico s={14}><circle cx="7" cy="7" r="6.500" fill="#7d7a72" stroke="#3a3935" /><path d="M4 7h6" stroke="#3a3935" strokeWidth="1.300" /></Ico>
          <Ico s={14}><circle cx="7" cy="7" r="6.500" fill="#7d7a72" stroke="#3a3935" /><rect x="4" y="5" width="6" height="4.500" fill="none" stroke="#3a3935" /></Ico>
        </WindowButtons>
        <Text w={141} bold>NVIDIA Visual Profiler</Text>
        <Indicators>
          <Indicator $gap={11}>
            <Ico w={17} h={13}>
              <g fill="none" stroke="#dfdbd2" strokeWidth="1.300"><path d="M.8 4.500c5-4 10.400-4 15.400 0" opacity=".5" /><path d="M3 7c3.500-2.800 7.500-2.800 11 0M5.500 9.500c2-1.600 4-1.600 6 0" /></g>
              <circle cx="8.500" cy="11.500" r="1.200" fill="#dfdbd2" />
            </Ico>
          </Indicator>
          <LangBadge>lt</LangBadge>
          <Indicator $gap={12}><Ico w={8} h={14}><path d="M1 4l6 6-3 3V1l3 3-6 6" fill="none" stroke="#dfdbd2" strokeWidth="1.300" /></Ico></Indicator>
          <Indicator $gap={9}>
            <Ico w={21} h={12}>
              <rect x=".7" y=".7" width="17" height="10.500" rx="1.500" fill="none" stroke="#dfdbd2" strokeWidth="1.200" />
              <rect x="2.500" y="2.500" width="13.500" height="7" fill="#8a877f" />
              <path d="M5 4.500l5 1.500 0-2 4 4-5-1v2z" fill="#dfdbd2" />
              <path d="M19.500 3.500v5" stroke="#dfdbd2" strokeWidth="1.500" />
            </Ico>
          </Indicator>
          <Indicator $gap={10}>
            <Ico w={17} h={14}>
              <path d="M1 5h2.500L7 2v10L3.500 9H1z" fill="#dfdbd2" />
              <path d="M9 4.500c1.300 1.500 1.300 3.500 0 5M11.500 3c2 2.500 2 5.500 0 8" fill="none" stroke="#dfdbd2" strokeWidth="1.300" />
              <path d="M14 1.500c2.500 3.500 2.500 7.500 0 11" fill="none" stroke="#dfdbd2" opacity=".4" />
            </Ico>
          </Indicator>
          <Text w={32}>10:29</Text>
          <Indicator>
            <Ico w={26} h={15}>
              <circle cx="18" cy="8" r="4.500" fill="none" stroke="#dfdbd2" strokeWidth="1.800" />
              <g stroke="#dfdbd2" strokeWidth="1.800"><path d="M13 8h-2M25 8h-2M18 13v2M14.500 4.500l-1.400-1.400M21.500 4.500l1.400-1.400M14.500 11.500l-1.400 1.400M21.500 11.500l1.400 1.400" /></g>
              <path d="M18 1v6" stroke="#4d4b45" strokeWidth="4" /><path d="M18 1v6" stroke="#dfdbd2" strokeWidth="1.700" />
            </Ico>
          </Indicator>
        </Indicators>
      </TitleBar>
      <Workspace>
        <Launcher>
          <Tile><Dash /></Tile>
          <Tile><Files /></Tile>
          <Tile $bg="linear-gradient(#b88268, #a4603f 40%, #a9663f)"><Fox /><Pip /></Tile>
          <Tile $bg="linear-gradient(#8360b8, #64379c 40%, #6b3fa6)"><Tex /><Pip /></Tile>
          <Tile><Draft /></Tile>
          <Tile><Butterfly /></Tile>
          <Tile $bg="linear-gradient(#5fbb80, #3fa764 40%, #45ad6a)"><Nvvp /><Pip /><Pip $right /></Tile>
          <Tile><Gauge /></Tile>
          <Tile><Editor /></Tile>
          <Tile><Office color="#2878b8" /></Tile>
          <Tile><Office color="#3c9e28" sheet /></Tile>
          <FoldedStack><Folded /></FoldedStack>
        </Launcher>
        <AppWindow>
          <MenuBar>
            {menus.map(([m, w]) => (
              <Text key={m} w={w}>{m === "Run" ? <><u>R</u>un</> : m}</Text>
            ))}
          </MenuBar>
          <ToolBar>
            <Tool><NewWin /></Tool>
            <Tool><Floppy /></Tool>
            <Tool><Floppy dots /></Tool>
            <Tool $gap={14}><ChartGo /></Tool>
            <Tool><Board /></Tool>
            <Tool><Lens /></Tool>
            <DropArrow />
            <Separator $w={13} />
            <Tool><Zoom kind="in" /></Tool>
            <Tool><Zoom kind="out" /></Tool>
            <Tool><Zoom kind="fit" /></Tool>
            <Separator $w={12} />
            <Tool><SignBox /></Tool>
            <Separator $w={11} />
            <Tool><FIcon /></Tool>
            <Tool><FIcon off /></Tool>
            <Separator $w={13} />
            <Tool><KeyIcon k="K" /></Tool>
            <Tool><Toggle><KeyIcon k="S" /></Toggle></Tool>
            <Tool><KeyIcon k="P" /></Tool>
            <Separator $w={12} />
            <Tool><Graph /></Tool>
            <DropArrow />
          </ToolBar>
          <Body>
            <Panel $h={186}>
              <TabStrip>
                <Tab $w={162} $pl={6}><Faded $on><Session /></Faded><Text w={113}>*NewSession1.nvvp</Text></Tab>
                <Tab $w={192} $pl={6}><Faded $on><Session /></Faded><Text w={143}>NewSession1-clone.nvvp</Text></Tab>
                <Tab $w={173} $pl={6}><Faded $on><Sheet /></Faded><Text w={123}>squareMatMulKernel</Text></Tab>
                <Tab $w={235} $pl={4} $active="tint"><Faded><Session /></Faded><Text w={185}>*NewSession1-clone-clone.nvvp</Text><CloseSlot><CloseX /></CloseSlot></Tab>
                <MinMax />
              </TabStrip>
              <TimelineBody>
                <Tree>
                  <Rows>
                    <Row $h={13} $pl={21}><Lift $dy={-9}><SignBox /><Text w={95} size={12.5} lh={16}>Context 1 (CUDA)</Text></Lift></Row>
                    <Row $h={22} $alt $pl={42}><Elbow /><Lift $gap={4}><Funnel /><Text w={85} size={12.5} lh={16}>MemCpy (HtoD)</Text></Lift></Row>
                    <Row $h={22} $pl={42}><Elbow /><Lift $gap={4}><Funnel /><Text w={85} size={12.5} lh={16}>MemCpy (DtoH)</Text></Lift></Row>
                    <Row $h={43} $alt $pl={37}><Lift $dy={-1}><SignBox plus /><Text w={49} size={12.5} lh={16}>Compute</Text></Lift></Row>
                    <Row $h={8} $pl={37}><Lift $dy={13}><SignBox /><Text w={49} size={12.5} lh={16}>Streams</Text></Lift></Row>
                  </Rows>
                </Tree>
                <Sash />
                <Chart>
                  <Ruler>
                    {marks.map((m) => (
                      <Mark key={m}><Text w={m.length > 6 ? 40 : 32} size={11.5} lh={16} color="#333">{m}</Text></Mark>
                    ))}
                  </Ruler>
                  <Rows>
                    <Lane $h={13} />
                    <Lane $h={22} $alt>
                      <Track>
                        {tints.map(([c, w], i) => <Interval key={i} $w={w} $gap={i ? 0 : 57} $bg={c} />)}
                        <Interval $w={2} $gap={210} $bg="#bccacb" />
                        <Interval $w={2} $gap={252} $bg="#bdbfcb" />
                        <Interval $w={2} $gap={225} $bg="#c0bdcb" />
                        <Interval $w={2} $gap={225} $bg="#cbbdc6" />
                      </Track>
                    </Lane>
                    <Lane $h={22}>
                      <Track>
                        <Interval $w={1} $gap={319} $bg="#cfdcdc" />
                        <Interval $w={1} $gap={253} $bg="#cfd4e2" />
                        <Interval $w={1} $gap={226} $bg="#d3cfe0" />
                        <Interval $w={1} $gap={226} $bg="#e0cfda" />
                      </Track>
                    </Lane>
                    <Lane $h={43} $alt>
                      <Track>
                        <Kernel w={260} gap={59} bg="linear-gradient(#68d5d3, #2f6a69)" tw={253}>squareMatMulKernel(float*, float*, float*...</Kernel>
                        <Kernel w={239} gap={242} pl={6} bg="linear-gradient(#8b68d5, #452f6a)" tw={227}>squareMatMulKernel(float*, float*, fl...</Kernel>
                        <Kernel w={67} gap={214} pl={5} bg="linear-gradient(#d5688c, #6a2f43)" tw={128}>squareMatMulKernel(</Kernel>
                      </Track>
                      <Track>
                        <Kernel w={268} gap={305} pl={3} bg="linear-gradient(#688dd5, #2f446a)" tw={262}>squareMatMulKernel(float*, float*, float*, i...</Kernel>
                        <Kernel w={241} gap={213} pl={3} bg="linear-gradient(#cb68d5, #652f6a)" tw={235}>squareMatMulKernel(float*, float*, flo...</Kernel>
                      </Track>
                    </Lane>
                    <Lane $h={8} />
                  </Rows>
                  <HBarSlot><ScrollBar len={1081} at={387} size={31} /></HBarSlot>
                </Chart>
                <VBarSlot><ScrollBar v len={109} at={10} size={31} /></VBarSlot>
              </TimelineBody>
            </Panel>
            <Lower>
              <Panel $w={1057}>
                <TabStrip $grey>
                  <Tab $w={97} $pl={4} $active="white"><Faded $w={20}><ViewIcon kind="chart" /></Faded><Text w={48}>Analysis</Text><CloseSlot><CloseX /></CloseSlot></Tab>
                  <Tab $w={163} $pl={5}><Faded $on $w={20}><ViewIcon kind="gpu" /></Faded><Text w={135}>GPU Details (Summary)</Text></Tab>
                  <Tab $w={99} $pl={6}><Faded $on $w={20}><ViewIcon kind="cpu" /></Faded><Text w={69}>CPU Details</Text></Tab>
                  <Tab $w={130} $pl={5}><Faded $on $w={20}><ViewIcon kind="hash" /></Faded><Text w={101}>OpenACC Details</Text></Tab>
                  <Tab $w={125} $pl={5}><Faded $on $w={20}><ViewIcon kind="hash" /></Faded><Text w={95}>OpenMP Details</Text></Tab>
                  <Tab $w={77} $pl={5}><Faded $on $w={19}><ViewIcon kind="console" /></Faded><Text w={48}>Console</Text></Tab>
                  <Tab $w={80} $pl={4}><Faded $on $w={20}><ViewIcon kind="chart" /></Faded><Text w={47}>Settings</Text></Tab>
                  <ViewButtons><PenIcon /><MinBox /><MaxBox /></ViewButtons>
                </TabStrip>
                <AnalysisBody>
                  <Guide>
                    <GuideTools>
                      <Toggle><ListIcon nested /></Toggle>
                      <GuideSlot $w={30}><ListIcon /></GuideSlot>
                      <GuideSlot $w={27}><UpArrow /></GuideSlot>
                      <VLine />
                      <ChartGo />
                      <Text w={111} ml={3} color="#4c4c4c">Export PDF Report</Text>
                    </GuideTools>
                    <Stages>
                      <Stage><Text w={177} bold size={12.5} color="#4c4c4c">1. CUDA Application Analysis</Text></Stage>
                      <Stage><Text w={186} bold size={12.5} color="#4c4c4c">2. Performance-Critical Kernels</Text></Stage>
                      <Stage><Text w={257} bold size={12.5} color="#4c4c4c">3. Compute, Bandwidth, or Latency Bound</Text></Stage>
                    </Stages>
                    <GuideScroll>
                      <Steps>
                        <Intro>{intro.map(([t, w]) => <Text key={t} w={w} size={11.5} lh={14}>{t}</Text>)}</Intro>
                        <Action $hot><ChartGo /><Text w={148}>Perform Latency Analysis</Text></Action>
                        <Note $h={64}>{latencyNote.map(([t, w]) => <Text key={t} w={w} size={10.5} lh={12}>{t}</Text>)}</Note>
                        <Action $mb={6}><ChartGo /><Text w={157}>Perform Compute Analysis</Text></Action>
                        <Action><ChartGo /><Text w={217}>Perform Memory Bandwidth Analysis</Text></Action>
                        <Note $h={54} $pt={6}>{computeNote.map(([t, w]) => <Text key={t} w={w} size={10.5} lh={12}>{t}</Text>)}</Note>
                        <Action><ChartGo /><Text w={86}>Rerun Analysis</Text></Action>
                      </Steps>
                      <ScrollBar v len={345} at={0} size={273} dimStart />
                    </GuideScroll>
                  </Guide>
                  <Results>
                    <Legend><Text w={43} lh={17}>Results</Text></Legend>
                    <ResultPage>
                      <Headline><InfoMark>i</InfoMark><Text w={399} bold size={12.5}>Kernel Performance Is Bound By Instruction And Memory Latency</Text></Headline>
                      {summary.map(([t, w]) => <Text key={w} w={w} size={12.5} lh={15}>{t}</Text>)}
                      <Note $h={305} $pt={19}><UtilizationChart /></Note>
                    </ResultPage>
                    <ScrollBar len={769} at={0} size={738} dimStart />
                  </Results>
                </AnalysisBody>
              </Panel>
              <Panel $w={242}>
                <TabStrip $pr={18}>
                  <Tab $w={112} $pl={6} $active="tint"><Faded $w={18}><ViewIcon kind="table" /></Faded><Text w={62}>Properties</Text><CloseSlot><CloseX /></CloseSlot></Tab>
                  <MinMax />
                </TabStrip>
                <PropertyBody>
                  <Text w={215} lh={15}>Select or highlight a single interval to</Text>
                  <Text w={85} lh={15}>see properties</Text>
                  <PropertyBox />
                  <ScrollBar len={236} at={0} size={155} dimStart />
                </PropertyBody>
              </Panel>
            </Lower>
          </Body>
        </AppWindow>
      </Workspace>
    </Desktop>
  );
}
